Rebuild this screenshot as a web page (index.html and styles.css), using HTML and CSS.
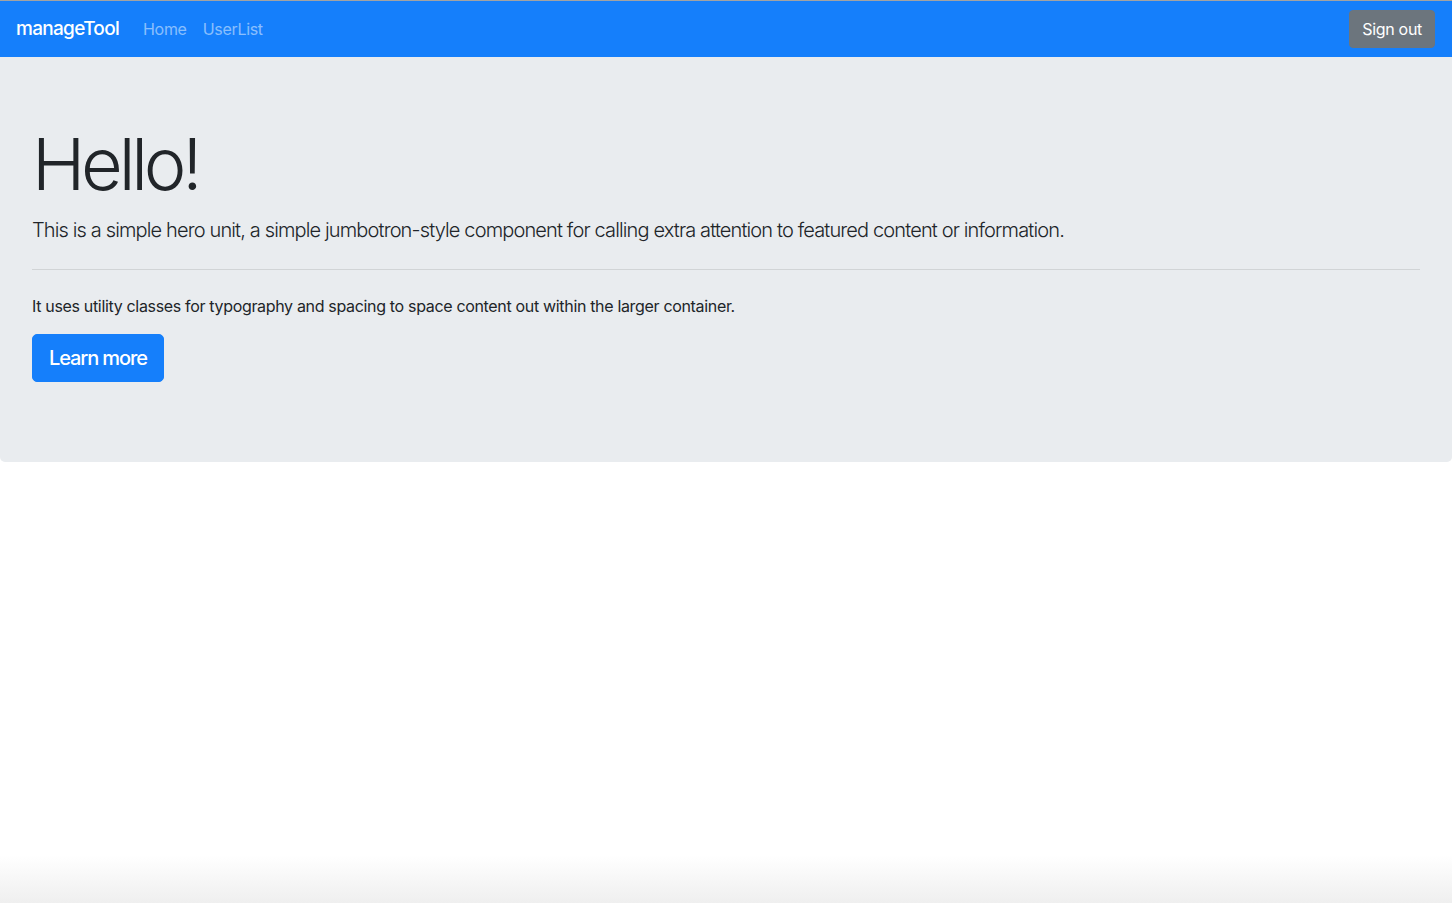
FILE: index.html
```html
<!DOCTYPE html>
<html lang="en">
<head>
<meta charset="utf-8">
<title>manageTool</title>
<link rel="stylesheet" href="styles.css">
</head>
<body>
<nav class="navbar">
  <div class="nav-left">
    <a class="brand" href="#">manageTool</a>
    <a class="nav-link" href="#">Home</a>
    <a class="nav-link" href="#">UserList</a>
  </div>
  <button class="btn-signout">Sign out</button>
</nav>
<main class="jumbotron">
  <h1 class="display">Hello!</h1>
  <p class="lead">This is a simple hero unit, a simple jumbotron-style component for calling extra attention to featured content or information.</p>
  <hr class="divider">
  <p class="body-text">It uses utility classes for typography and spacing to space content out within the larger container.</p>
  <p class="lead action"><a class="btn-primary" href="#">Learn more</a></p>
</main>
</body>
</html>
```
FILE: styles.css
```css
html, body {
  margin: 0;
  padding: 0;
}
body {
  font-family: Inter, "Noto Sans", "Liberation Sans", sans-serif;
  color: #212529;
  font-size: 16px;
  line-height: 1.5;
  border-top: 1px solid #a3a3a3;
  min-height: calc(100vh - 1px);
  background: linear-gradient(to bottom, #ffffff calc(100% - 48px), #efefef 100%);
}
.navbar {
  display: flex;
  align-items: center;
  justify-content: space-between;
  height: 56px;
  padding: 0 16px;
  background: #157ffb;
  box-sizing: border-box;
}
.nav-left {
  display: flex;
  align-items: center;
}
.brand {
  color: #fff;
  font-size: 19px;
  font-weight: 500;
  text-decoration: none;
  margin-right: 16px;
  letter-spacing: -0.7px;
}
.nav-link {
  color: rgba(255,255,255,0.5);
  font-size: 16px;
  text-decoration: none;
  padding: 8px 8px;
  letter-spacing: -0.3px;
}
.btn-signout {
  font-family: inherit;
  font-size: 16px;
  color: #fff;
  background: #6c757d;
  border: 1px solid #6c757d;
  border-radius: 4px;
  padding: 6px 12px;
  line-height: 24px;
  margin-right: 1px;
  letter-spacing: -0.3px;
}
.jumbotron {
  display: block;
  background: #e9ecef;
  padding: 64px 32px;
  border-radius: 0 0 5px 5px;
}
.display {
  margin: 0 0 8px 0;
  font-size: 72px;
  font-weight: 300;
  line-height: 1.2;
  letter-spacing: -4.2px;
}
.lead {
  margin: 0 0 16px 0;
  font-size: 20px;
  font-weight: 300;
  letter-spacing: -0.86px;
}
.divider {
  margin: 24px 0;
  border: 0;
  border-top: 1px solid rgba(0,0,0,0.1);
}
.body-text {
  margin: 0 0 16px 0;
  font-size: 16px;
  letter-spacing: -0.33px;
}
.action {
  margin: 0 0 16px 0;
  letter-spacing: normal;
}
.btn-primary {
  display: inline-block;
  font-size: 20px;
  font-weight: 500;
  line-height: 30px;
  padding: 8px 16px;
  border: 1px solid #157ffb;
  background: #157ffb;
  color: #fff;
  border-radius: 5px;
  text-decoration: none;
  letter-spacing: -1.1px;
}
```
